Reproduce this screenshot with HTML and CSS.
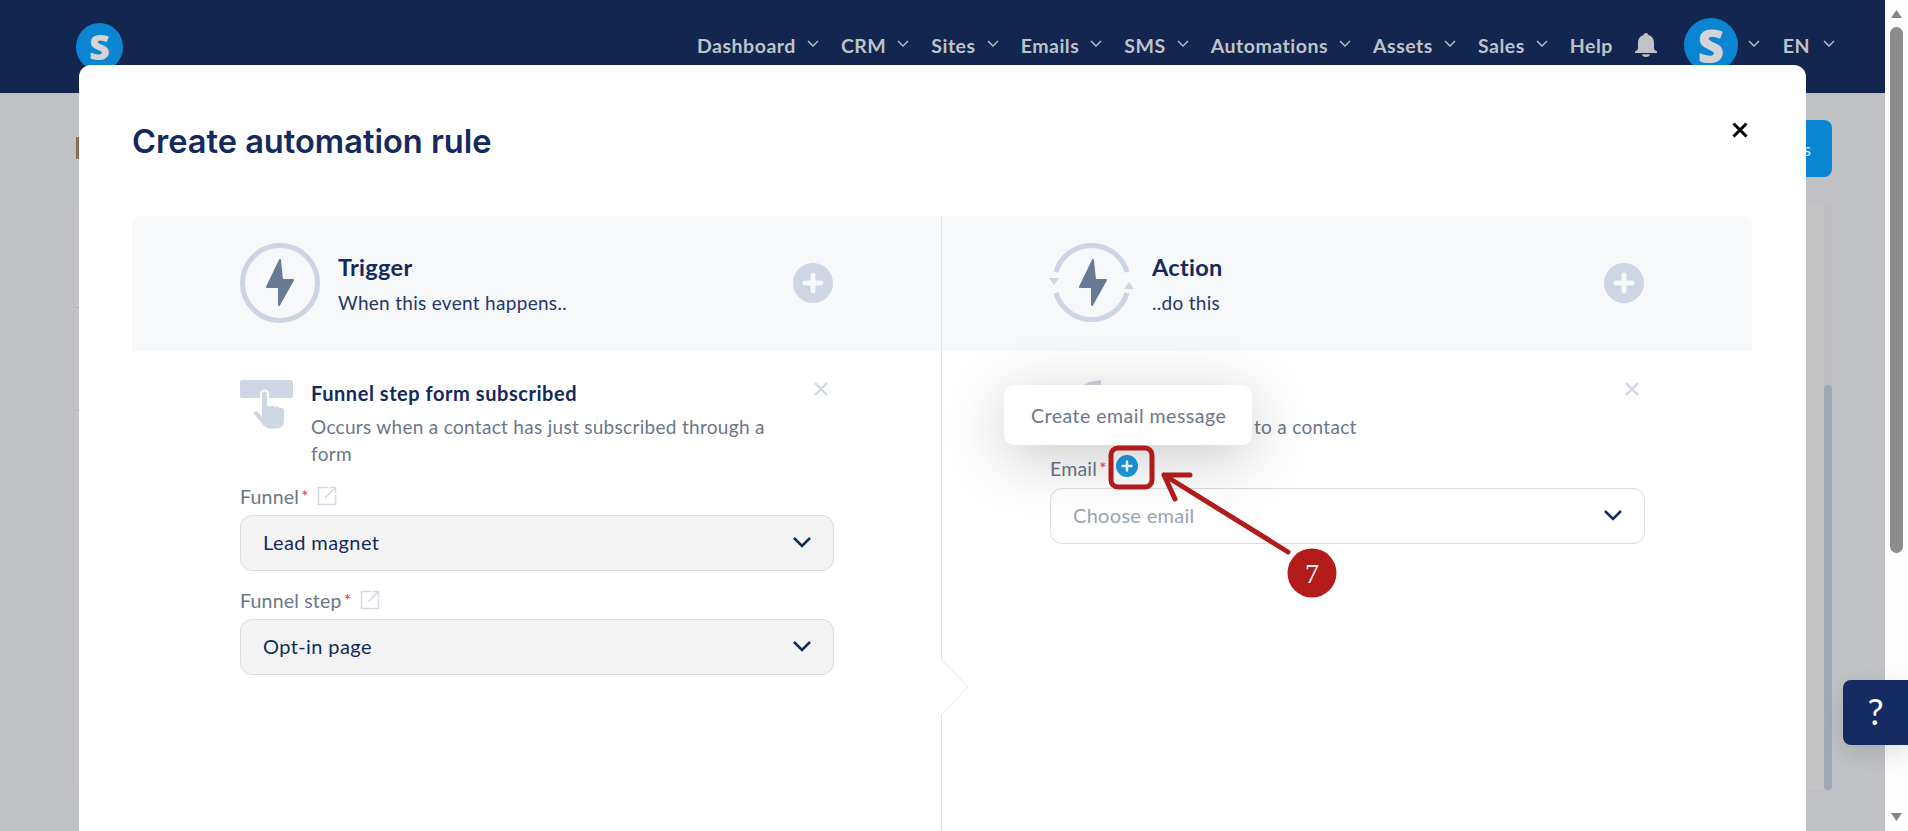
FILE: index.html
```html
<!DOCTYPE html>
<html lang="en">
<head>
<meta charset="utf-8">
<title>Create automation rule</title>
<link rel="stylesheet" href="styles.css">
</head>
<body>
<div class="app">
  <div class="page">
    <header class="topbar">
      <div class="logo">S</div>
      <nav class="nav">
        <span class="nav-item">Dashboard<svg class="nav-chev" viewBox="0 0 12 7"><path d="M1 1l5 5 5-5"/></svg></span>
        <span class="nav-item">CRM<svg class="nav-chev" viewBox="0 0 12 7"><path d="M1 1l5 5 5-5"/></svg></span>
        <span class="nav-item">Sites<svg class="nav-chev" viewBox="0 0 12 7"><path d="M1 1l5 5 5-5"/></svg></span>
        <span class="nav-item">Emails<svg class="nav-chev" viewBox="0 0 12 7"><path d="M1 1l5 5 5-5"/></svg></span>
        <span class="nav-item">SMS<svg class="nav-chev" viewBox="0 0 12 7"><path d="M1 1l5 5 5-5"/></svg></span>
        <span class="nav-item">Automations<svg class="nav-chev" viewBox="0 0 12 7"><path d="M1 1l5 5 5-5"/></svg></span>
        <span class="nav-item">Assets<svg class="nav-chev" viewBox="0 0 12 7"><path d="M1 1l5 5 5-5"/></svg></span>
        <span class="nav-item">Sales<svg class="nav-chev" viewBox="0 0 12 7"><path d="M1 1l5 5 5-5"/></svg></span>
        <span class="nav-item help">Help</span>
        <svg class="bell" viewBox="0 0 22 24"><path d="M11 0c1.400 0 2.300.9 2.400 2.100C17 3.100 19 6 19 10v5c0 1.400 1 2.500 3 3.600V20H0v-1.400C2 17.500 3 16.400 3 15v-5c0-4 2-6.900 5.600-7.900C8.700.9 9.600 0 11 0z"/><path d="M7 21.200h8c0 1.600-1.600 2.800-4 2.800s-4-1.200-4-2.800z"/></svg>
        <div class="avatar">S</div>
        <svg class="nav-chev avatar-chev" viewBox="0 0 12 7"><path d="M1 1l5 5 5-5"/></svg>
        <span class="nav-item lang">EN<svg class="nav-chev" viewBox="0 0 12 7"><path d="M1 1l5 5 5-5"/></svg></span>
      </nav>
    </header>
    <main class="backdrop">
      <div class="back-tools">
        <div class="back-heading"></div>
        <div class="back-button">Rules</div>
      </div>
      <div class="back-panel">
        <div class="back-table">
          <div class="back-row"></div>
          <div class="back-row"></div>
        </div>
        <div class="back-track"><div class="back-thumb"></div></div>
      </div>
    </main>
  </div>
  <aside class="scrollbar">
    <svg class="scroll-arrow" viewBox="0 0 11 8"><path d="M5.500 0L11 8H0z"/></svg>
    <div class="scroll-thumb"></div>
    <svg class="scroll-arrow scroll-down" viewBox="0 0 11 8"><path d="M0 0h11L5.500 8z"/></svg>
  </aside>
</div>

<section class="modal">
  <div class="modal-head">
    <h1 class="modal-title">Create automation rule</h1>
    <svg class="modal-close" viewBox="0 0 16 16"><path d="M1.500 1.500l13 13M14.500 1.500l-13 13"/></svg>
  </div>
  <div class="builder">
    <div class="head-cell">
      <svg class="head-icon" viewBox="0 0 80 80">
        <circle class="ring" cx="40" cy="40" r="37.500"/>
        <path class="bolt" d="M40 17L27 44h12l0 18 14-25H42z"/>
      </svg>
      <div class="head-text">
        <div class="head-name">Trigger</div>
        <div class="head-desc">When this event happens..</div>
      </div>
      <svg class="head-plus" viewBox="0 0 40 40"><circle cx="20" cy="20" r="20"/><path d="M20 12v16M12 20h16"/></svg>
    </div>
    <div class="head-cell head-right">
      <svg class="head-icon action-icon" viewBox="0 0 85 80">
        <path class="ring" d="M7 29A37 37 0 0 1 78 29"/>
        <path class="ring" d="M7 50A37 37 0 0 0 78 50"/>
        <path class="tip" d="M0 35h10l-5 7zM75 46h10l-5-7z"/>
        <path class="bolt" d="M44 17L31 44h12l0 18 14-25H46z"/>
      </svg>
      <div class="head-text">
        <div class="head-name">Action</div>
        <div class="head-desc">..do this</div>
      </div>
      <svg class="head-plus" viewBox="0 0 40 40"><circle cx="20" cy="20" r="20"/><path d="M20 12v16M12 20h16"/></svg>
    </div>

    <div class="body-cell">
      <div class="event">
        <svg class="event-icon" viewBox="0 0 53 50">
          <rect class="event-fill" x="0" y="0" width="53" height="18" rx="2"/>
          <path class="event-fill event-hand" d="M21 14c0-2 1.500-3.500 3.500-3.500S28 12 28 14v11l2 .5c1-1.500 4-1.500 5 .5 1.500-1 4-.5 5 1 2-.5 5 .5 5 3.500v10c0 5-3 9-9 9h-6c-3 0-5-1-7-3l-9-11c-1.500-2-1.500-3.500 0-4.500s3.500-.5 5 1l2 2.500z"/>
        </svg>
        <div class="event-text">
          <div class="event-name">Funnel step form subscribed</div>
          <div class="event-desc">Occurs when a contact has just subscribed through a form</div>
        </div>
        <svg class="event-close" viewBox="0 0 14 14"><path d="M1 1l12 12M13 1L1 13"/></svg>
      </div>
      <div class="field-label">Funnel<span class="req">*</span>
        <svg class="ext" viewBox="0 0 20 20"><path d="M11 1.500H1.500v17h17V9M8 12L18.500 1.500M12.500 1.500h6v6"/></svg>
      </div>
      <div class="select filled">Lead magnet<svg class="select-chev" viewBox="0 0 20 12"><path d="M2 2l8 8 8-8"/></svg></div>
      <div class="field-label label-next">Funnel step<span class="req">*</span>
        <svg class="ext" viewBox="0 0 20 20"><path d="M11 1.500H1.500v17h17V9M8 12L18.500 1.500M12.500 1.500h6v6"/></svg>
      </div>
      <div class="select filled">Opt-in page<svg class="select-chev" viewBox="0 0 20 12"><path d="M2 2l8 8 8-8"/></svg></div>
    </div>

    <div class="body-cell body-right">
      <div class="event">
        <svg class="event-icon" viewBox="0 0 53 50"><path class="event-fill" d="M39 2l12-2v24L2 24z"/></svg>
        <div class="event-text">
          <div class="event-name">Send email</div>
          <div class="event-desc">Sends an email to a contact</div>
        </div>
        <svg class="event-close" viewBox="0 0 14 14"><path d="M1 1l12 12M13 1L1 13"/></svg>
      </div>
      <div class="field-label email-label">Email<span class="req">*</span>
        <svg class="add-email" viewBox="0 0 22 22"><circle cx="11" cy="11" r="11"/><path d="M11 6.500v9M6.500 11h9"/></svg>
      </div>
      <div class="select placeholder">Choose email<svg class="select-chev" viewBox="0 0 20 12"><path d="M2 2l8 8 8-8"/></svg></div>
      <div class="tooltip">Create email message</div>
      <svg class="notch" viewBox="0 0 28 58"><path class="notch-fill" d="M0 1L27 29 0 57z"/><path class="notch-line" d="M0 1L27 29 0 57"/></svg>
    </div>
  </div>
</section>

<div class="help-button">?</div>

<svg class="annotation" viewBox="0 0 1908 831">
  <rect class="ann-line" x="1111" y="448" width="41" height="39" rx="7"/>
  <path class="ann-line" d="M1288 552L1164 475M1164 475L1190 475M1164 475L1175 499"/>
  <circle class="ann-dot" cx="1312" cy="573" r="24.500"/>
  <text class="ann-num" x="1312" y="583">7</text>
</svg>
</body>
</html>
```

FILE: styles.css
```css
* { box-sizing: border-box; }
html, body { margin: 0; height: 100%; overflow: hidden; }
body { font-family: "Lato", "Open Sans", sans-serif; color: #14295c; background: #bfc1c4; }

.app { display: flex; height: 831px; }
.page { flex: 1; min-width: 0; display: flex; flex-direction: column; background: #bfc1c4; }

.topbar { height: 93px; background: #13264f; position: relative; display: flex; padding: 23px 0 0 76px; flex: none; }
.logo { width: 47px; height: 48px; border-radius: 50%; background: #0a85d1; color: #d2d4d6; font: 800 36px/47px "Open Sans", sans-serif; text-align: center; flex: none; }
.nav { display: flex; align-items: center; height: 44px; margin-left: 574px; color: #bfc3c9; font-weight: 700; font-size: 19.500px; letter-spacing: .51px; white-space: nowrap; }
.nav-item { display: flex; align-items: center; }
.nav-chev { width: 12px; height: 7px; margin: 0 22px 0 11px; fill: none; stroke: #bfc3c9; stroke-width: 1.400; flex: none; position: relative; top: -2px; }
.help { margin-right: 22px; }
.bell { width: 22px; height: 24px; fill: #bfc3c9; flex: none; }
.avatar { width: 54px; height: 54px; border-radius: 50%; background: #0a85d1; color: #d2d4d6; font: 800 46px/54px "Open Sans", sans-serif; text-align: center; margin-left: 27px; flex: none; letter-spacing: 0; }
.avatar-chev { margin-left: 10px; margin-right: 23px; }
.lang .nav-chev { margin-left: 13px; margin-right: 0; }

.backdrop { flex: 1; display: flex; flex-direction: column; padding: 27px 53px 41px 76px; }
.back-tools { display: flex; justify-content: space-between; align-items: flex-start; height: 84px; }
.back-heading { width: 3px; height: 22px; margin-top: 17px; background: #8b6a55; }
.back-button { width: 130px; height: 57px; background: #0a85d1; color: #d5e6f2; border-radius: 8px; display: flex; align-items: center; justify-content: flex-end; padding-right: 21px; font-size: 18px; }
.back-panel { flex: 1; display: flex; }
.back-table { flex: 1; background: #c5c5c5; padding-top: 103px; }
.back-row { width: 4px; height: 103px; border-top: 1px solid #a8a8a8; }
.back-track { width: 8px; background: #bdbdbf; border-radius: 4px; display: flex; flex-direction: column; justify-content: flex-end; }
.back-thumb { height: 405px; background: #9fa8b5; border-radius: 4px; }

.scrollbar { width: 23px; flex: none; background: #fdfdfd; display: flex; flex-direction: column; align-items: center; padding: 10px 0 10px; }
.scroll-arrow { width: 11px; height: 8px; fill: #858585; flex: none; }
.scroll-thumb { width: 13px; height: 526px; margin-top: 9px; border-radius: 7px; background: #8c8c8c; }
.scroll-down { margin-top: auto; }

.modal { position: absolute; left: 79px; top: 65px; width: 1727px; height: 766px; background: #fff; border-radius: 12px 12px 0 0; padding: 48px 54px 0 53px; display: flex; flex-direction: column; overflow: hidden; }
.modal-head { display: flex; justify-content: space-between; height: 103px; flex: none; }
.modal-title { margin: 1px 0 0; font: 600 32.600px/54px "Inter", sans-serif; color: #14295c; }
.modal-close { width: 16px; height: 16px; margin: 9px 4px 0 0; fill: none; stroke: #000; stroke-width: 3; }

.builder { flex: 1; display: grid; grid-template-columns: 809px 1fr; grid-template-rows: 135px 1fr; }
.head-cell { background: #f7f8fa; display: flex; align-items: center; padding: 0 108px; border-top-left-radius: 10px; }
.head-right { border-left: 1px solid #e2e4e8; border-top-left-radius: 0; border-top-right-radius: 10px; padding-left: 107px; }
.head-icon { width: 80px; height: 80px; flex: none; margin: -2px 18px 0 0; }
.action-icon { width: 85px; margin-right: 18px; }
.ring { fill: none; stroke: #ccd5e1; stroke-width: 5; }
.tip { fill: #ccd5e1; }
.bolt { fill: #6b7a94; stroke: #6b7a94; stroke-width: 2; stroke-linejoin: round; }
.head-text { flex: 1; }
.head-name { font-size: 23.500px; letter-spacing: .3px; font-weight: 700; line-height: 30px; }
.head-desc { font-size: 19px; letter-spacing: .3px; line-height: 26px; margin-top: 8px; color: #24376a; }
.head-plus { width: 40px; height: 40px; flex: none; margin-top: -2px; }
.head-plus circle { fill: #cdd6e2; }
.head-plus path { stroke: #f7f8fa; stroke-width: 5; stroke-linecap: round; fill: none; }

.body-cell { padding: 29px 107px 0 108px; position: relative; }
.body-right { border-left: 1px solid #e2e4e8; padding-left: 108px; }
.event { display: flex; }
.event-icon { width: 53px; height: 50px; flex: none; margin-right: 18px; }
.event-fill { fill: #cdd6e2; }
.event-hand { stroke: #fff; stroke-width: 2; }
.event-text { flex: 1; max-width: 480px; }
.event-name { font-size: 20px; letter-spacing: .55px; font-weight: 700; line-height: 26px; }
.event-desc { font-size: 19px; letter-spacing: .3px; line-height: 27px; margin-top: 7px; color: #6b7689; }
.event-close { width: 14px; height: 14px; flex: none; margin: 2px 6px 0 auto; fill: none; stroke: #ccd5e1; stroke-width: 2; }

.field-label { display: flex; align-items: center; height: 26px; margin-top: 17px; padding-bottom: 2px; font-size: 19.500px; letter-spacing: .2px; color: #6b7689; }
.label-next { margin-top: 17px; }
.req { color: #e8395f; font-size: 18px; line-height: 26px; margin-left: 2px; }
.ext { width: 20px; height: 20px; margin-left: 8px; fill: none; stroke: #d5dbe5; stroke-width: 1.600; }
.select { display: flex; align-items: center; justify-content: space-between; height: 56px; margin-top: 5px; padding: 0 21px 2px 22px; border: 1px solid #dcdcdc; border-radius: 12px; font-size: 20px; letter-spacing: .4px; }
.filled { background: #f3f3f3; }
.placeholder { color: #9aa3b2; margin-top: 6px; background: #fff; letter-spacing: .3px; }
.select-chev { width: 20px; height: 12px; fill: none; stroke: #14295c; stroke-width: 2.500; flex: none; }
.email-label { margin-top: 16px; }
.add-email { width: 22px; height: 22px; margin: -4px 0 0 9px; }
.add-email circle { fill: #1a9be6; }
.add-email path { stroke: #fff; stroke-width: 2.500; stroke-linecap: round; }

.tooltip { position: absolute; left: 62px; top: 34px; width: 248px; height: 60px; padding: 1px 0 0 27px; display: flex; align-items: center; background: #fff; border-radius: 10px; color: #6b7689; font-size: 19.500px; letter-spacing: .5px; box-shadow: 0 12px 60px rgba(0, 0, 0, .22); }
.notch { position: absolute; left: -1px; top: 307px; width: 28px; height: 58px; }
.notch-fill { fill: #fff; }
.notch-line { fill: none; stroke: #e6e6e6; stroke-width: 1; }

.help-button { position: absolute; left: 1843px; top: 680px; width: 65px; height: 65px; background: #142c62; border-radius: 8px 0 0 8px; color: #fff; font: 400 36px/63px "Lato", sans-serif; text-align: center; box-shadow: 0 8px 24px rgba(0, 0, 0, .12); }

.annotation { position: absolute; left: 0; top: 0; width: 1908px; height: 831px; pointer-events: none; }
.ann-line { fill: none; stroke: #b01c1c; stroke-width: 5; stroke-linecap: round; }
.ann-dot { fill: #b41c1c; }
.ann-num { fill: #fff; font: 400 28px "Liberation Serif", serif; text-anchor: middle; }
```
